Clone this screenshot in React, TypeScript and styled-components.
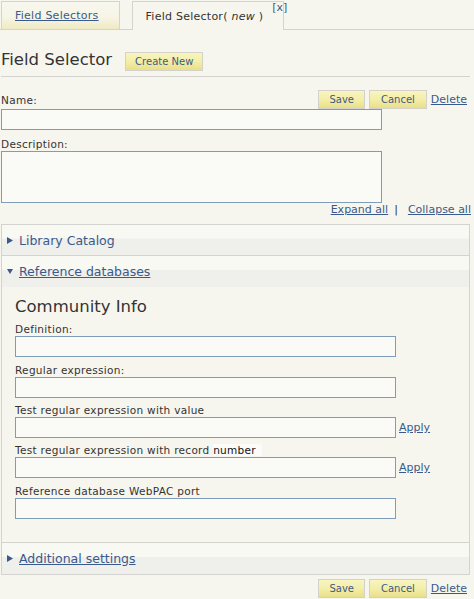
import React from "react";
import styled, { createGlobalStyle } from "styled-components";

const PAGE = "#f7f6ee";
const LINE = "#d3d3cf";
const LINK = "#3a5a8c";
const FIELD_BORDER = "#7f9db9";

const Global = createGlobalStyle`
  html, body { margin: 0; padding: 0; background: ${PAGE}; }
  body {
    font-family: "DejaVu Sans", Verdana, sans-serif;
    color: #333;
    width: 474px;
    height: 599px;
    overflow: hidden;
  }
`;

const TabBar = styled.div`
  display: flex;
  align-items: flex-end;
  gap: 12px;
  padding: 1px 0 0 1px;
  border-bottom: 1px solid ${LINE};
`;

const Tab = styled.div<{ $active?: boolean }>`
  position: relative;
  box-sizing: border-box;
  height: ${(p) => (p.$active ? 29 : 28)}px;
  margin-bottom: ${(p) => (p.$active ? -1 : 0)}px;
  padding: 0 20px 0 13px;
  display: flex;
  align-items: center;
  border: 1px solid ${LINE};
  border-bottom: none;
  background: ${(p) =>
    p.$active ? PAGE : "linear-gradient(#f8f7ef 0%, #f7f5e6 55%, #efeac2 100%)"};
  font-size: 11px;
  letter-spacing: 0.25px;
  color: #333;
  white-space: nowrap;
`;

const TabClose = styled.span`
  position: absolute;
  top: 0;
  right: -4px;
  font-size: 11px;
  line-height: 11px;
  letter-spacing: 0;
  color: ${LINK};
`;

const Link = styled.a`
  color: ${LINK};
  text-decoration: underline;
  font-size: 11px;
  cursor: pointer;
  white-space: nowrap;
`;

const Main = styled.div`
  margin-left: 1px;
  width: 469px;
`;

const TitleRow = styled.div`
  display: flex;
  align-items: center;
  gap: 13px;
  padding: 22px 0 5px 0;
  border-bottom: 1px solid ${LINE};
`;

const Title = styled.h1`
  margin: -2px 0 2px 0;
  font-size: 16.5px;
  line-height: 19px;
  font-weight: normal;
  color: #333;
`;

const Button = styled.button<{ $pad?: number }>`
  height: 19px;
  box-sizing: border-box;
  margin: 0;
  padding: 0 ${(p) => p.$pad ?? 10}px;
  border: 1px solid #d2d2ca;
  background: linear-gradient(#f8f5c0 0%, #f3eea8 50%, #e9df8a 100%);
  color: #3d5a82;
  font-family: inherit;
  font-size: 10px;
  line-height: 17px;
  cursor: pointer;
`;

const ButtonGroup = styled.div`
  display: flex;
  align-items: center;
  gap: 4px;
  padding-right: 3px;
`;

const FieldHead = styled.div`
  display: flex;
  align-items: flex-end;
  justify-content: space-between;
  margin-top: 13px;
`;

const Label = styled.div<{ $mt?: number; $pb?: number }>`
  font-size: 10.5px;
  letter-spacing: 0.3px;
  line-height: 14px;
  color: #333;
  margin-top: ${(p) => p.$mt ?? 0}px;
  padding-bottom: ${(p) => p.$pb ?? 0}px;
  white-space: nowrap;
`;

const Hi = styled.span`
  color: #111;
  background: #fbfbf9;
  padding-right: 6px;
`;

const TextInput = styled.input`
  display: block;
  box-sizing: border-box;
  width: 381px;
  height: 21px;
  margin: 0;
  padding: 0 2px;
  border: 1px solid ${FIELD_BORDER};
  background: #fafaf7;
  font-family: inherit;
  font-size: 11px;
  outline: none;
`;

const TextArea = styled.textarea`
  display: block;
  box-sizing: border-box;
  width: 381px;
  height: 52px;
  margin: 0;
  padding: 2px;
  border: 1px solid ${FIELD_BORDER};
  background: #fafaf7;
  font-family: inherit;
  font-size: 11px;
  resize: none;
  outline: none;
`;

const ToggleRow = styled.div`
  display: flex;
  justify-content: flex-end;
  align-items: center;
  line-height: 14px;
  font-size: 11px;
  margin-right: -1px;
`;

const Sep = styled.span`
  color: #333;
  margin: 0 10px 0 6px;
`;

const Accordion = styled.div`
  margin-top: 7px;
  border: 1px solid ${LINE};
`;

const AccHeader = styled.div<{ $first?: boolean }>`
  display: flex;
  align-items: center;
  gap: 6px;
  box-sizing: border-box;
  height: ${(p) => (p.$first ? 30 : 32)}px;
  padding-left: 5px;
  border-top: ${(p) => (p.$first ? "none" : `1px solid ${LINE}`)};
  background: linear-gradient(#f9f9f4 0%, #f9f9f4 44%, #efefec 46%, #efefec 100%);
`;

const AccTitle = styled.span<{ $underline?: boolean }>`
  font-size: 12.5px;
  color: ${LINK};
  text-decoration: ${(p) => (p.$underline ? "underline" : "none")};
  white-space: nowrap;
`;

const AccBody = styled.div`
  padding: 10px 0 23px 13px;
`;

const SubTitle = styled.h2`
  margin: 0;
  font-size: 16.5px;
  line-height: 20px;
  font-weight: normal;
  color: #333;
`;

const InputRow = styled.div`
  display: flex;
  align-items: center;
  gap: 3px;
`;

const BottomBar = styled.div`
  display: flex;
  justify-content: flex-end;
  margin-top: 4px;
`;

const Arrow = ({ down }: { down?: boolean }) => (
  <svg width="6" height="7" viewBox="0 0 6 7" style={{ flex: "none" }}>
    {down ? (
      <polygon points="0,1 6,1 3,6" fill="#3a5a8c" />
    ) : (
      <polygon points="0,0 6,3.5 0,7" fill="#3a5a8c" />
    )}
  </svg>
);

const Actions = () => (
  <ButtonGroup>
    <Button>Save</Button>
    <Button $pad={11}>Cancel</Button>
    <Link>Delete</Link>
  </ButtonGroup>
);

export default function App() {
  return (
    <>
      <Global />
      <TabBar>
        <Tab>
          <Link>Field Selectors</Link>
        </Tab>
        <Tab $active>
          <span>
            Field Selector( <i>new</i> )
          </span>
          <TabClose>[x]</TabClose>
        </Tab>
      </TabBar>
      <Main>
        <TitleRow>
          <Title>Field Selector</Title>
          <Button $pad={9}>Create New</Button>
        </TitleRow>

        <FieldHead>
          <Label $pb={2}>Name:</Label>
          <Actions />
        </FieldHead>
        <TextInput />

        <Label $mt={7}>Description:</Label>
        <TextArea />

        <ToggleRow>
          <Link>Expand all</Link>
          <Sep>|</Sep>
          <Link>Collapse all</Link>
        </ToggleRow>

        <Accordion>
          <AccHeader $first>
            <Arrow />
            <AccTitle>Library Catalog</AccTitle>
          </AccHeader>
          <AccHeader>
            <Arrow down />
            <AccTitle $underline>Reference databases</AccTitle>
          </AccHeader>
          <AccBody>
            <SubTitle>Community Info</SubTitle>
            <Label $mt={5}>Definition:</Label>
            <TextInput />
            <Label $mt={6}>Regular expression:</Label>
            <TextInput />
            <Label $mt={5}>Test regular expression with value</Label>
            <InputRow>
              <TextInput />
              <Link>Apply</Link>
            </InputRow>
            <Label $mt={5}>
              Test regular expression with record <Hi>number</Hi>
            </Label>
            <InputRow>
              <TextInput />
              <Link>Apply</Link>
            </InputRow>
            <Label $mt={6}>Reference database WebPAC port</Label>
            <TextInput />
          </AccBody>
          <AccHeader>
            <Arrow />
            <AccTitle $underline>Additional settings</AccTitle>
          </AccHeader>
        </Accordion>

        <BottomBar>
          <Actions />
        </BottomBar>
      </Main>
    </>
  );
}
